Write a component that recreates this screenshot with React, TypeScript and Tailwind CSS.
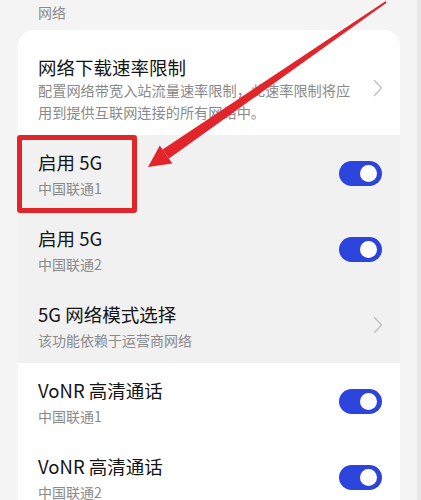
import React from "react";

const font = { fontFamily: '"Noto Sans CJK SC", "Noto Sans", sans-serif' };

function Toggle() {
  return (
    <div className="relative h-[25px] w-[43px] shrink-0 rounded-full bg-[#2c44dc]">
      <div className="absolute right-[5px] top-[4px] h-[17px] w-[17px] rounded-full bg-white" />
    </div>
  );
}

function Chevron() {
  return (
    <svg width="10" height="18" viewBox="0 0 10 18" className="shrink-0">
      <path d="M1.5 1.5 L8.5 9 L1.5 16.5" fill="none" stroke="#c4c4c4" strokeWidth="1.6" strokeLinecap="round" strokeLinejoin="round" />
    </svg>
  );
}

type RowProps = { title: string; sub: string; right: "toggle" | "chevron"; gray?: boolean };

function Row({ title, sub, right, gray }: RowProps) {
  return (
    <div className={`flex h-[76px] items-center justify-between pl-[20px] ${gray ? "bg-[#f1f1f1]" : "bg-white"} ${right === "toggle" ? "pr-[18px]" : "pr-[17px]"}`}>
      <div className="flex flex-col pt-[2px]">
        <span className="text-[18.5px] leading-[24px] text-[#141414]">{title}</span>
        <span className="mt-[4px] text-[14px] leading-[20px] text-[#8a8a8a]">{sub}</span>
      </div>
      {right === "toggle" ? <Toggle /> : <Chevron />}
    </div>
  );
}

export default function App() {
  return (
    <div className="relative h-[500px] w-[421px] overflow-hidden bg-[#f4f4f4]" style={font}>
      <div className="absolute right-0 top-0 h-full w-[4px] bg-[#e6e6e6]" />
      <div className="h-[30px] pl-[38px] pt-[1px] text-[14px] leading-[22px] text-[#8a8a8a]">网络</div>

      <div className="ml-[18px] w-[382px] overflow-hidden rounded-t-[16px] bg-white">
        <div className="flex h-[105px] items-center justify-between pl-[20px] pr-[17px]">
          <div className="flex w-[314px] flex-col self-start pt-[25px]">
            <span className="text-[18.5px] leading-[24px] text-[#141414]">网络下载速率限制</span>
            <span className="text-[14.2px] leading-[22px] text-[#8a8a8a]">
              配置网络带宽入站流量速率限制，此速率限制将应用到提供互联网连接的所有网络中。
            </span>
          </div>
          <div className="mt-[10px]">
            <Chevron />
          </div>
        </div>
        <Row title="启用 5G" sub="中国联通1" right="toggle" gray />
        <Row title="启用 5G" sub="中国联通2" right="toggle" gray />
        <Row title="5G 网络模式选择" sub="该功能依赖于运营商网络" right="chevron" gray />
        <Row title="VoNR 高清通话" sub="中国联通1" right="toggle" />
        <Row title="VoNR 高清通话" sub="中国联通2" right="toggle" />
      </div>

      <div className="absolute left-[17px] top-[135px] h-[78px] w-[120px] rounded-[3px] border-[5px] border-[#e2252b]" />

      <svg className="absolute left-0 top-0" width="421" height="500" viewBox="0 0 421 500">
        <polygon points="169,158.5 162.5,149.5 385.4,1.2 386.6,2.8" fill="#e2252b" />
        <polygon points="148,167 159.8,145.5 172.4,163.5" fill="#e2252b" />
      </svg>
    </div>
  );
}
